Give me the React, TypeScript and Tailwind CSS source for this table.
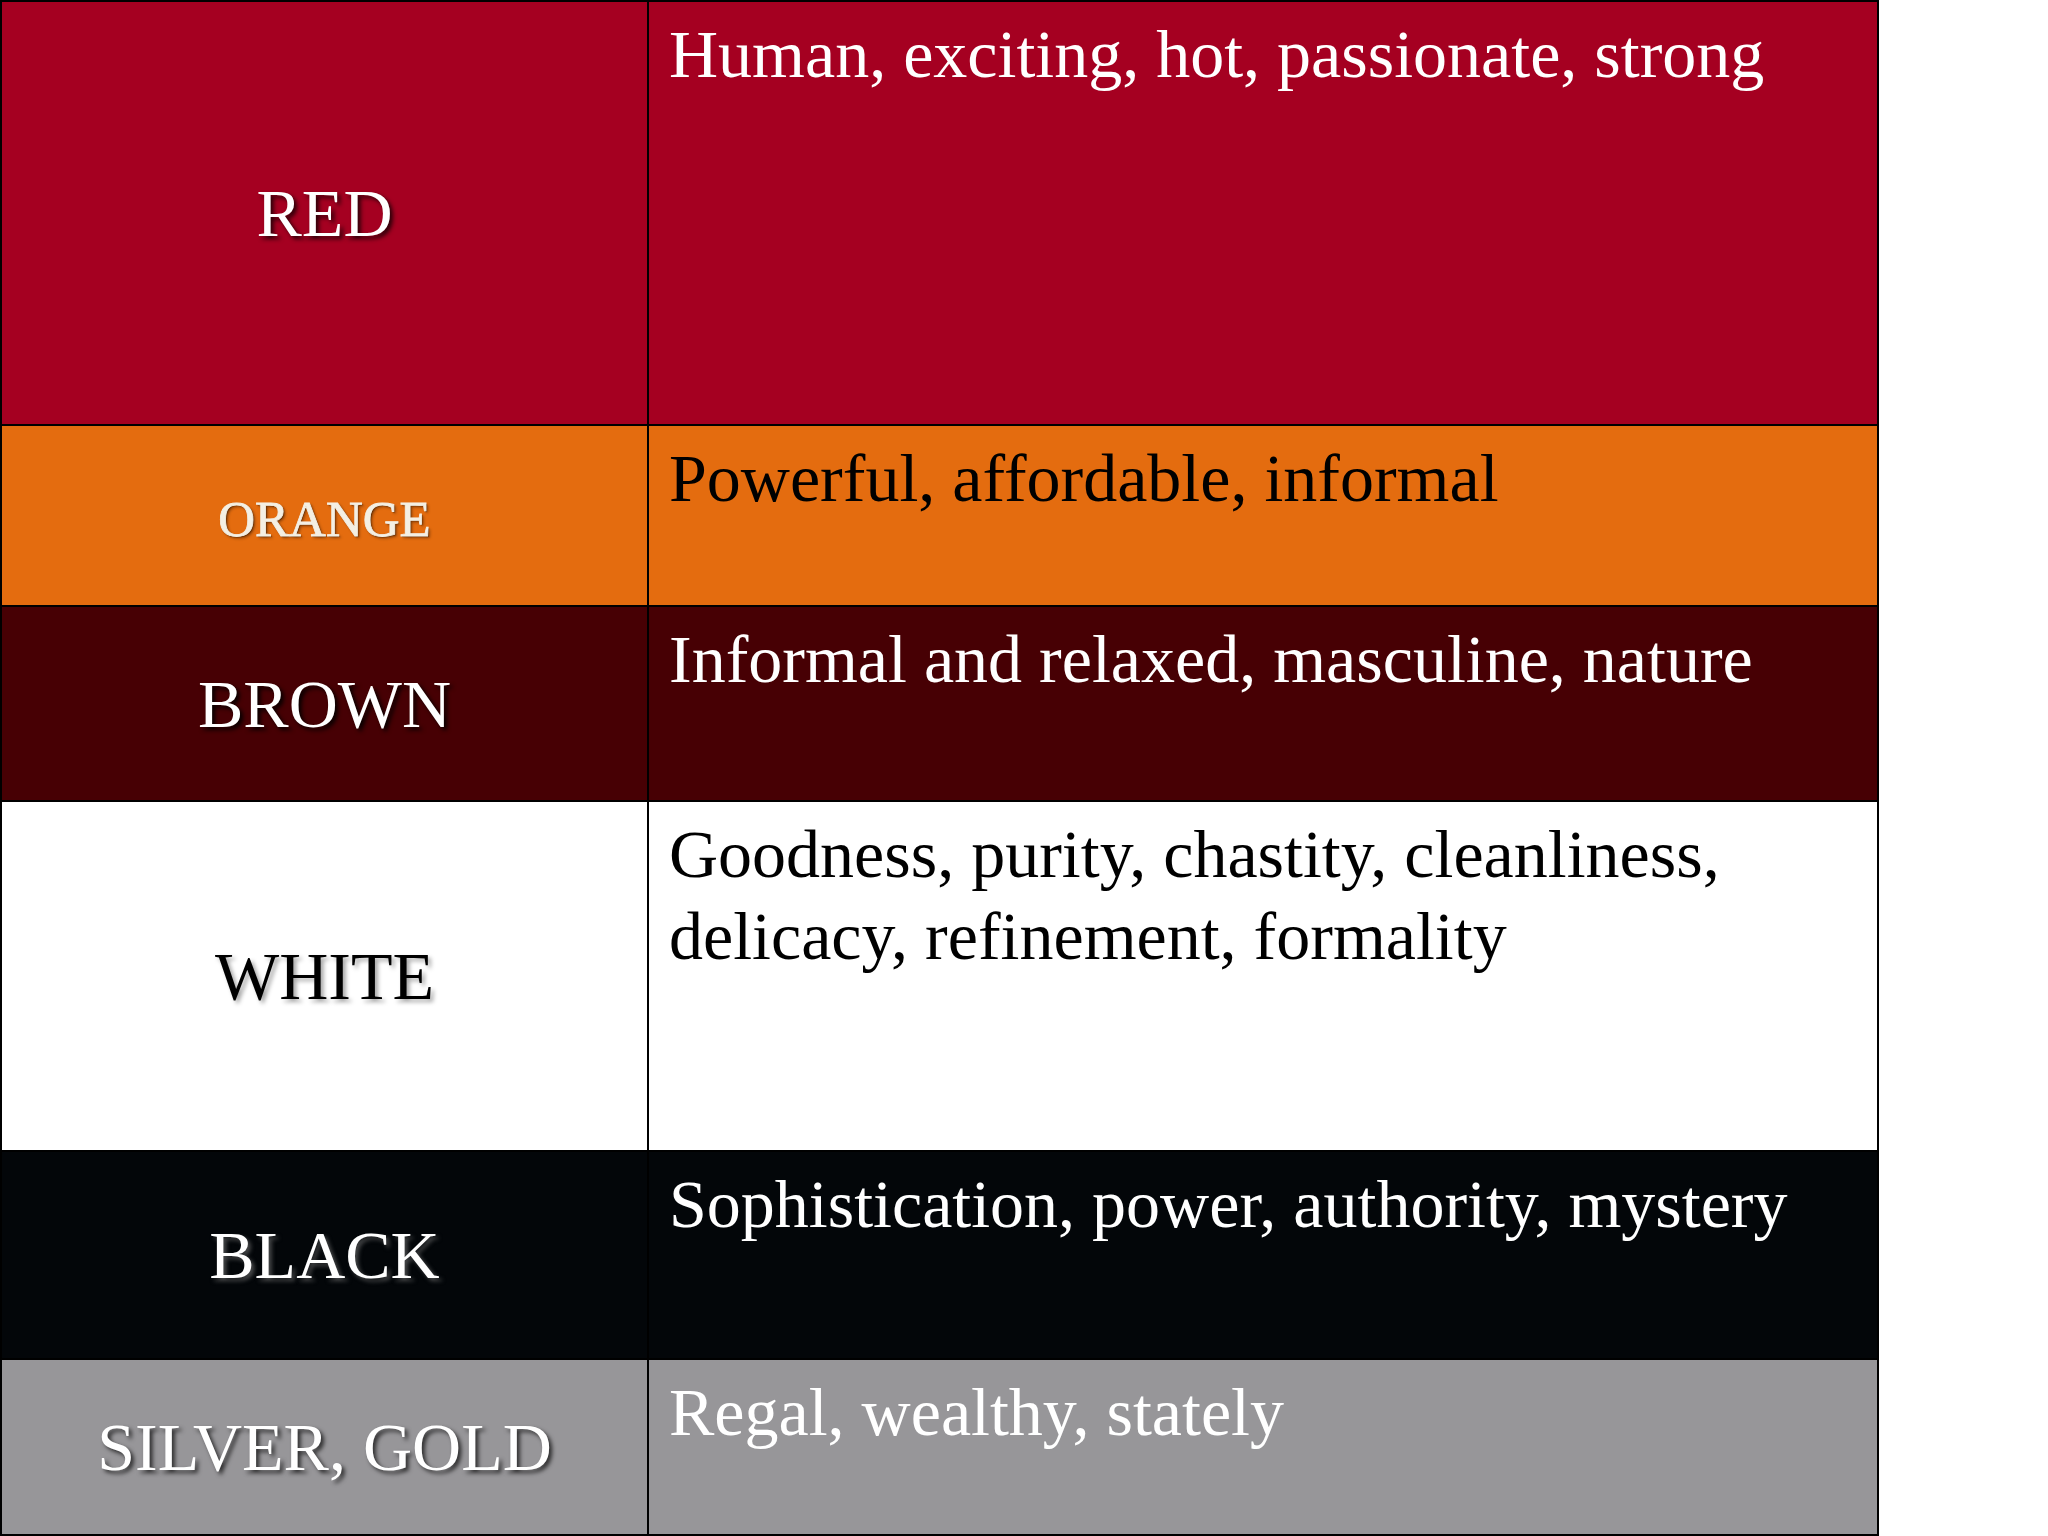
const rows = [
  {
    label: 'RED',
    text: ['Human, exciting, hot, passionate, strong'],
    h: 'h-[424px]',
    bg: 'bg-[#a50021]',
    labelCls: 'text-white text-[68px] [text-shadow:3px_3px_4px_rgba(0,0,0,0.75)]',
    textCls: 'text-white',
  },
  {
    label: 'ORANGE',
    text: ['Powerful, affordable, informal'],
    h: 'h-[181px]',
    bg: 'bg-[#e46c0f]',
    labelCls:
      'mt-[8px] text-[#f4efe3] text-[51px] [-webkit-text-stroke:0.8px_#f4efe3] [text-shadow:1px_1px_1px_rgba(90,40,0,0.9),2px_2px_3px_rgba(0,0,0,0.4)]',
    textCls: 'text-black',
  },
  {
    label: 'BROWN',
    text: ['Informal and relaxed, masculine, nature'],
    h: 'h-[195px]',
    bg: 'bg-[#470004]',
    labelCls: 'text-white text-[68px] [text-shadow:3px_3px_4px_rgba(0,0,0,0.9)]',
    textCls: 'text-white',
  },
  {
    label: 'WHITE',
    text: ['Goodness, purity, chastity, cleanliness,', 'delicacy, refinement, formality'],
    h: 'h-[350px]',
    bg: 'bg-white',
    labelCls: 'text-black text-[68px] [text-shadow:3px_3px_4px_rgba(0,0,0,0.35)]',
    textCls: 'text-black',
  },
  {
    label: 'BLACK',
    text: ['Sophistication, power, authority, mystery'],
    h: 'h-[208px]',
    bg: 'bg-[#030609]',
    labelCls: 'text-white text-[68px] [text-shadow:3px_3px_4px_rgba(120,120,120,0.6)]',
    textCls: 'text-white',
  },
  {
    label: 'SILVER, GOLD',
    text: ['Regal, wealthy, stately'],
    h: 'h-[178px]',
    bg: 'bg-[#979699]',
    labelCls: 'text-white text-[68px] [text-shadow:3px_3px_4px_rgba(0,0,0,0.7)]',
    textCls: 'text-white',
  },
];

export default function App() {
  return (
    <div className="w-[2048px] h-[1536px] bg-white overflow-hidden font-['Liberation_Serif','Times_New_Roman',serif]">
      <div className="w-[1879px] border-l-2 border-r-2 border-black">
        {rows.map((row, i) => (
          <div
            key={row.label}
            className={`flex ${row.h} ${row.bg} border-t-2 border-black ${i === rows.length - 1 ? 'border-b-2' : ''}`}
          >
            {/* colour name */}
            <div className="w-[647px] shrink-0 border-r-2 border-black flex items-center justify-center">
              <span className={`leading-none whitespace-nowrap ${row.labelCls}`}>{row.label}</span>
            </div>
            {/* meaning */}
            <div className={`flex-1 pl-[20px] pt-[12px] text-[68px] leading-[1.2] ${row.textCls}`}>
              {row.text.map(line => (
                <div key={line} className="whitespace-nowrap">{line}</div>
              ))}
            </div>
          </div>
        ))}
      </div>
    </div>
  );
}
